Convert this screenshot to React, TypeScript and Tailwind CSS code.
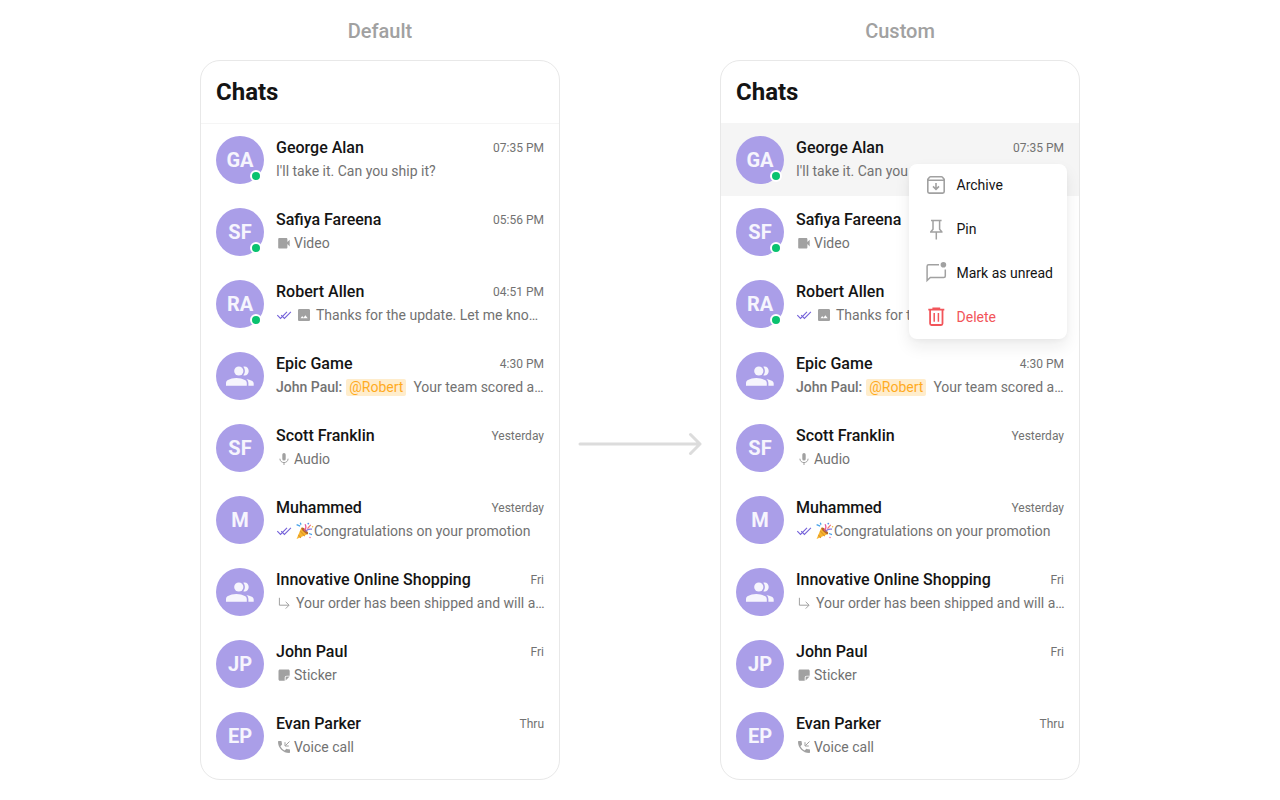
import React from 'react';

type PreviewIcon = 'video' | 'image' | 'audio' | 'party' | 'reply' | 'sticker' | 'call';

interface Chat {
  name: string;
  initials?: string;
  time: string;
  online?: boolean;
  read?: boolean;
  icon?: PreviewIcon;
  sender?: string;
  mention?: string;
  text: string;
}

interface ChatPanelProps {
  title: string;
  withMenu?: boolean;
}

const CHATS: Chat[] = [
  { name: 'George Alan', initials: 'GA', time: '07:35 PM', online: true, text: "I'll take it. Can you ship it?" },
  { name: 'Safiya Fareena', initials: 'SF', time: '05:56 PM', online: true, icon: 'video', text: 'Video' },
  { name: 'Robert Allen', initials: 'RA', time: '04:51 PM', online: true, read: true, icon: 'image', text: 'Thanks for the update. Let me kno…' },
  { name: 'Epic Game', time: '4:30 PM', sender: 'John Paul:', mention: '@Robert', text: 'Your team scored a…' },
  { name: 'Scott Franklin', initials: 'SF', time: 'Yesterday', icon: 'audio', text: 'Audio' },
  { name: 'Muhammed', initials: 'M', time: 'Yesterday', read: true, icon: 'party', text: 'Congratulations on your promotion' },
  { name: 'Innovative Online Shopping', time: 'Fri', icon: 'reply', text: 'Your order has been shipped and will a…' },
  { name: 'John Paul', initials: 'JP', time: 'Fri', icon: 'sticker', text: 'Sticker' },
  { name: 'Evan Parker', initials: 'EP', time: 'Thru', icon: 'call', text: 'Voice call' },
];

const GroupIcon = () => (
  <svg className="w-7 h-5" viewBox="0 0 28 20" fill="currentColor">
    <circle cx="12.800" cy="5" r="4.600" />
    <path d="M0 19.800v-2.500c0-1.400.7-2.600 2-3.200 2.400-1.200 5-2.100 8.400-2.100s6 .9 8.400 2.100c1.300.600 2 1.800 2 3.200v2.500z" />
    <path d="M17.300 9.300c2.100-2.500 2.100-6.100 0-8.600 3-.900 5.400 1.500 5.400 4.300s-2.400 5.200-5.400 4.300z" />
    <path d="M22.400 19.800v-2.600c0-1.800-.8-3.200-2.100-4.200 2 .4 3.900.9 5.500 1.700 1.200.6 1.900 1.500 1.900 2.800v2.300z" />
  </svg>
);

const DoubleCheckIcon = () => (
  <svg className="w-4 h-4 text-[#7461d9]" viewBox="0 0 16 16" fill="none" stroke="currentColor" strokeWidth="1.1">
    <path d="M1.300 8.200l3.200 3.200 6.500-6.500M5.200 8.200l3.200 3.200 6.500-6.500" />
  </svg>
);

const VideoIcon = () => (
  <svg className="w-4 h-4" viewBox="0 0 16 16" fill="currentColor">
    <path d="M3.400 3h6.800c.7 0 1.200.5 1.200 1.200v2.900l2.300-2.300v6.600l-2.300-2.300v3.300c0 .7-.5 1.200-1.200 1.200H3.400c-.7 0-1.200-.5-1.200-1.200V4.200C2.200 3.500 2.700 3 3.400 3z" />
  </svg>
);

const ImageIcon = () => (
  <svg className="w-4 h-4" viewBox="0 0 16 16" fill="currentColor">
    <path fillRule="evenodd" d="M3.300 2h9.400c.7 0 1.300.600 1.300 1.300v9.400c0 .7-.6 1.300-1.300 1.300H3.300C2.600 14 2 13.400 2 12.700V3.300C2 2.600 2.600 2 3.300 2zM4.500 11.300h7.200L9.400 8.200l-1.900 2.500-1.300-1.700z" />
  </svg>
);

const MicIcon = () => (
  <svg className="w-4 h-4" viewBox="0 0 16 16" fill="none" stroke="currentColor">
    <rect x="6.300" y="2" width="3.400" height="7.600" rx="1.700" fill="currentColor" stroke="none" />
    <path d="M3.900 7.700c0 2.300 1.900 3.900 4.100 3.900s4.100-1.600 4.100-3.900M8 11.600V14" strokeWidth="1" />
  </svg>
);

const ReplyIcon = () => (
  <svg className="w-4 h-4" viewBox="0 0 16 16" fill="none" stroke="currentColor" strokeWidth="1">
    <path d="M3.400 2.800v7.400H13M9.700 6.800l3.400 3.400-3.400 3.400" />
  </svg>
);

const StickerIcon = () => (
  <svg className="w-4 h-4" viewBox="0 0 16 16" fill="currentColor">
    <path d="M4 2.500h8.200c.9 0 1.500.600 1.500 1.500v4.700h-2.900c-1.200 0-2.100.9-2.100 2.100v2.900H4c-.9 0-1.500-.6-1.500-1.500V4c0-.9.6-1.500 1.500-1.500z" />
    <path d="M9.600 13.500v-2.600c0-.8.600-1.300 1.300-1.300h2.700z" />
  </svg>
);

const CallIcon = () => (
  <svg className="w-4 h-4" viewBox="0 0 16 16" fill="currentColor">
    <path d="M13.300 10.300c-.8 0-1.600-.1-2.400-.4-.2-.1-.5 0-.7.200l-1.500 1.500C6.800 10.600 5.300 9.100 4.400 7.200l1.500-1.500c.2-.2.200-.5.200-.7-.3-.7-.4-1.500-.4-2.300 0-.4-.3-.7-.7-.7H2.700c-.4 0-.7.300-.7.700C2 8.900 7.100 14 13.300 14c.4 0 .7-.3.700-.7V11c0-.4-.3-.7-.7-.7z" />
    <path d="M13.500 2.500L9.300 6.700M9 3.200V7h3.800" fill="none" stroke="currentColor" strokeWidth="1" />
  </svg>
);

const PartyIcon = () => (
  <svg className="w-[18px] h-[18px]" viewBox="0 0 18 18" fill="none">
    <path d="M.6 17L5.400 5.400c3 .9 5.400 3.200 6.600 6.700z" fill="#f9b62e" />
    <path d="M4.200 9l4.600 5.200M2.400 13l2.500 2.800" stroke="#e09a2c" strokeWidth="1.200" />
    <ellipse cx="8.800" cy="8.800" rx="1.500" ry="4.400" transform="rotate(-45 8.800 8.800)" fill="#b5652b" />
    <path d="M8.300 8.500c1.800-1.800 2-4 .8-6.200" stroke="#e9559b" strokeWidth="1.300" />
    <path d="M9.800 9.500c1-2.200 3-2.800 6.300-2.300" stroke="#8c79dd" strokeWidth="1.300" />
    <path d="M11.300 6.500c1.700-.300 1.700-2.800 3.700-3.500" stroke="#f27878" strokeWidth="1.300" />
    <path d="M.6 2.600l3.600 1.600M4.300.8l.7 2M13 11.500l3 1.100" stroke="#4aa3e8" strokeWidth="1.300" />
    <circle cx="12.300" cy="1.600" r=".9" fill="#5a8ee6" />
    <circle cx="16.600" cy="4.700" r=".8" fill="#f5b83d" />
    <circle cx="14" cy="15.500" r=".8" fill="#ed6eaa" />
  </svg>
);

const ArchiveIcon = () => (
  <svg className="w-6 h-6" viewBox="0 0 24 24" fill="none" stroke="currentColor" strokeWidth="1.600">
    <path d="M3.800 6.300v12.300c0 .9.600 1.500 1.500 1.500h13.400c.9 0 1.500-.6 1.500-1.500V6.300l-1.700-2.100c-.3-.300-.6-.5-1-.5h-11c-.4 0-.7.200-1 .5zM3.800 7.200h16.400" />
    <path d="M12 10v6.300M9 13.400l3 3 3-3" />
  </svg>
);

const PinIcon = () => (
  <svg className="w-6 h-6" viewBox="0 0 24 24" fill="none" stroke="currentColor" strokeWidth="1.500">
    <path d="M7 3.600h10.600M9 3.600v8.600l-2.200 2.500v.3h11v-.3l-2.200-2.500V3.600M12.300 15v7.400" />
  </svg>
);

const UnreadIcon = () => (
  <svg className="w-6 h-6" viewBox="0 0 24 24" fill="none" stroke="currentColor" strokeWidth="1.500">
    <path d="M15 3.800H4.600c-.9 0-1.500.600-1.500 1.500v14.200l3.200-3.100h13.500c.9 0 1.500-.6 1.500-1.500V8.500" />
    <circle cx="19.400" cy="3.700" r="2.800" fill="currentColor" stroke="none" />
  </svg>
);

const DeleteIcon = () => (
  <svg className="w-6 h-6" viewBox="0 0 24 24" fill="none" stroke="currentColor" strokeWidth="1.800">
    <path d="M4.300 4.600h16M9.300 4.300v-1h6v1M6.100 4.600v14c0 .9.500 1.400 1.400 1.400h9.600c.9 0 1.400-.5 1.400-1.400v-14" />
    <path d="M10.200 8v8.800M14.400 8v8.800" strokeWidth="1.500" />
  </svg>
);

const PREVIEW_ICONS: Record<PreviewIcon, React.ReactNode> = {
  video: <VideoIcon />,
  image: <ImageIcon />,
  audio: <MicIcon />,
  party: <PartyIcon />,
  reply: <ReplyIcon />,
  sticker: <StickerIcon />,
  call: <CallIcon />,
};

const ICON_MARGINS: Record<PreviewIcon, string> = {
  video: 'mr-[2px]',
  image: 'mr-1',
  audio: 'mr-[2px]',
  party: '',
  reply: 'mr-1',
  sticker: 'mr-[2px]',
  call: 'mr-[2px]',
};

const MENU_ITEMS = [
  { label: 'Archive', icon: <ArchiveIcon /> },
  { label: 'Pin', icon: <PinIcon /> },
  { label: 'Mark as unread', icon: <UnreadIcon /> },
  { label: 'Delete', icon: <DeleteIcon />, danger: true },
];

const Avatar = ({ chat }: { chat: Chat }) => (
  <span className="relative flex items-center justify-center w-12 h-12 shrink-0 rounded-full bg-[#aa9ee8] text-white/90 text-xl font-bold">
    {chat.initials ?? <GroupIcon />}
    {chat.online && (
      <span className="absolute right-[2px] bottom-[2px] w-3 h-3 rounded-full border-2 border-white bg-[#09c26f]" />
    )}
  </span>
);

const Preview = ({ chat }: { chat: Chat }) => (
  <span className="flex items-center h-[22px] text-sm text-[#727272] whitespace-nowrap">
    {chat.read && (
      <span className="mr-1">
        <DoubleCheckIcon />
      </span>
    )}
    {chat.icon && <span className={`text-[#a1a1a1] ${ICON_MARGINS[chat.icon]}`}>{PREVIEW_ICONS[chat.icon]}</span>}
    {chat.sender && <span className="font-medium mr-1">{chat.sender}</span>}
    {chat.mention && (
      <span className="rounded-xs bg-[#ffedcc] text-[#ffab1f] leading-[17px] px-[3px] mr-[7px]">{chat.mention}</span>
    )}
    <span>{chat.text}</span>
  </span>
);

const ContextMenu = () => (
  <div
    role="menu"
    className="absolute z-10 top-10 right-3 flex flex-col gap-5 rounded-lg bg-white pl-[15px] pr-[14px] pt-[9px] pb-[10px] shadow-[0_8px_16px_rgba(20,20,20,0.08),0_2px_4px_rgba(20,20,20,0.03)]"
  >
    {MENU_ITEMS.map((item) => (
      <button
        key={item.label}
        role="menuitem"
        className={`flex items-center gap-[9px] text-sm whitespace-nowrap ${item.danger ? 'text-[#f2555a]' : 'text-[#141414]'}`}
      >
        <span className={item.danger ? 'text-[#f2555a]' : 'text-[#a1a1a1]'}>{item.icon}</span>
        {item.label}
      </button>
    ))}
  </div>
);

const ChatPanel: React.FC<ChatPanelProps> = ({ title, withMenu }) => (
  <section className="w-[360px] shrink-0">
    <p className="h-[60px] pt-[17px] text-center text-xl font-medium text-[#a1a1a1]">{title}</p>
    <div className="rounded-[20px] border border-[#e8e8e8] pb-[7px]">
      <h2 className="border-b border-[#f5f5f5] px-[15px] py-[15px] text-2xl font-bold text-[#141414]">Chats</h2>
      <ul>
        {CHATS.map((chat, i) => (
          <li key={chat.name} className="relative">
            <button
              className={`flex w-full gap-3 px-[15px] py-3 text-left ${withMenu && i === 0 ? 'bg-[#f5f5f5]' : ''}`}
            >
              <Avatar chat={chat} />
              <span className="flex-1 min-w-0">
                <span className="flex items-center justify-between h-6">
                  <span className="font-medium text-[#141414]">{chat.name}</span>
                  <span className="text-xs text-[#727272]">{chat.time}</span>
                </span>
                <Preview chat={chat} />
              </span>
            </button>
            {withMenu && i === 0 && <ContextMenu />}
          </li>
        ))}
      </ul>
    </div>
  </section>
);

export default function App() {
  return (
    <main className="flex justify-center min-h-screen bg-white font-[Roboto,sans-serif]">
      <ChatPanel title="Default" />
      <div className="flex w-40 shrink-0 justify-center pt-[432px]">
        <svg className="w-[124px] h-6" viewBox="0 0 124 24" fill="none" stroke="#dcdcdc" strokeWidth="3">
          <path d="M2 12h120M112.500 2.500L122 12l-9.500 9.500" strokeLinecap="round" strokeLinejoin="round" />
        </svg>
      </div>
      <ChatPanel title="Custom" withMenu />
    </main>
  );
}
